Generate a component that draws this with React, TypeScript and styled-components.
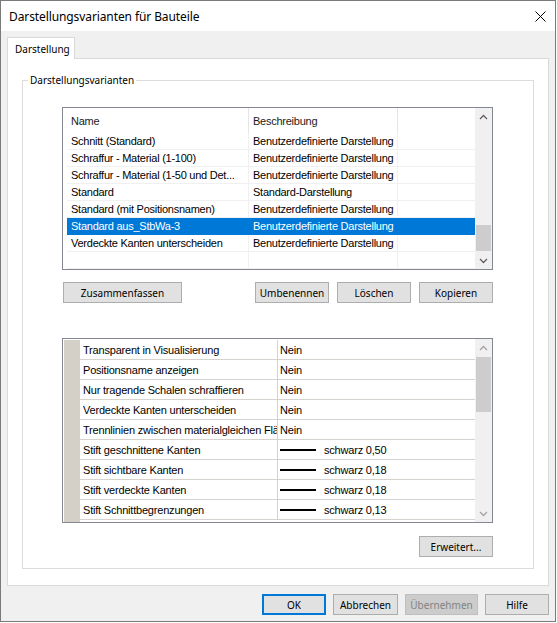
import React from "react";
import styled, { createGlobalStyle } from "styled-components";

const uiFont = `"Noto Sans", "Open Sans", Arial, sans-serif`;
const listFont = `"Liberation Sans", Arial, sans-serif`;

const GlobalStyle = createGlobalStyle`
  html, body {
    margin: 0;
    padding: 0;
    background: #ffffff;
  }
  * {
    box-sizing: border-box;
  }
`;

const Window = styled.div`
  width: 556px;
  height: 622px;
  border: 1px solid #7a7a7a;
  background: #f0f0f0;
  display: flex;
  flex-direction: column;
  font-family: ${uiFont};
  font-size: 10px;
  color: #000;
`;

const TitleBar = styled.div`
  height: 30px;
  flex: none;
  background: #fff;
  display: flex;
  align-items: center;
  justify-content: space-between;
  padding: 0 9px 0 8px;
`;

const Title = styled.span`
  font-size: 12px;
  letter-spacing: -0.1px;
`;

const Body = styled.div`
  flex: 1;
  display: flex;
  flex-direction: column;
  padding: 6px 6px 0 6px;
`;

const TabStrip = styled.div`
  display: flex;
  height: 21px;
`;

const Tab = styled.div`
  width: 68px;
  height: 22px;
  border: 1px solid #d9d9d9;
  border-bottom: none;
  background: #fff;
  padding-left: 7px;
  line-height: 22px;
  position: relative;
  z-index: 1;
`;

const Panel = styled.div`
  height: 528px;
  background: #fff;
  border: 1px solid #d9d9d9;
  display: flex;
  flex-direction: column;
  padding: 0 14px 16px 14px;
`;

const Group = styled.fieldset`
  flex: 1;
  margin: 13px 0 0 0;
  padding: 0;
  border: 1px solid #dcdcdc;
  min-width: 0;
  display: flex;
  flex-direction: column;
`;

const Legend = styled.legend`
  margin-left: 5px;
  padding: 0 2px;
  line-height: 16px;
  font-size: 10px;
`;

const GroupBody = styled.div`
  flex: 1;
  display: flex;
  flex-direction: column;
  padding: 19px 40px 11px 39px;
`;

/* ---------- list view ---------- */

const ListView = styled.div`
  width: 431px;
  height: 163px;
  border: 1px solid #828790;
  display: flex;
  font-family: ${listFont};
  font-size: 11px;
  letter-spacing: -0.25px;
  background: #fff;
`;

const ListMain = styled.div`
  flex: 1;
  padding-left: 4px;
  display: flex;
  flex-direction: column;
  overflow: hidden;
`;

const ListHeader = styled.div`
  height: 25px;
  display: flex;
  flex: none;
`;

const HeaderCell = styled.div<{ $w?: number }>`
  width: ${(p) => (p.$w ? `${p.$w}px` : "auto")};
  flex: ${(p) => (p.$w ? "none" : "1")};
  border-right: ${(p) => (p.$w ? "1px solid #e5e5e5" : "none")};
  padding-left: 4px;
  display: flex;
  align-items: center;
  color: #1a1a1a;
`;

const ListRow = styled.div<{ $selected?: boolean }>`
  height: 17px;
  flex: none;
  display: flex;
  background: ${(p) => (p.$selected ? "#0078d7" : "#fff")};
  color: ${(p) => (p.$selected ? "#fff" : "#000")};
  border-bottom: 1px solid ${(p) => (p.$selected ? "#0078d7" : "#f0f0f0")};
`;

const ListCell = styled.div<{ $w?: number; $selected?: boolean; $clip?: boolean }>`
  width: ${(p) => (p.$w ? `${p.$w}px` : "auto")};
  flex: ${(p) => (p.$w ? "none" : "1")};
  border-right: ${(p) =>
    p.$w ? `1px solid ${p.$selected ? "#0078d7" : "#f0f0f0"}` : "none"};
  padding: ${(p) => (p.$clip ? "0 6px 0 4px" : "0 0 0 4px")};
  line-height: 17px;
  white-space: nowrap;
  overflow: hidden;
  text-overflow: ${(p) => (p.$clip ? "ellipsis" : "clip")};
`;

/* ---------- scrollbar ---------- */

const ScrollBar = styled.div`
  width: 17px;
  flex: none;
  background: #f0f0f0;
  display: flex;
  flex-direction: column;
`;

const ScrollArrow = styled.div`
  height: 17px;
  flex: none;
  display: flex;
  align-items: center;
  justify-content: center;
`;

const ScrollTrack = styled.div<{ $atEnd?: boolean }>`
  flex: 1;
  display: flex;
  flex-direction: column;
  justify-content: ${(p) => (p.$atEnd ? "flex-end" : "flex-start")};
  padding: 1px 1px;
`;

const Thumb = styled.div<{ $h: number }>`
  height: ${(p) => p.$h}px;
  background: #cdcdcd;
`;

/* ---------- buttons ---------- */

const ButtonRow = styled.div<{ $mt: number }>`
  display: flex;
  gap: 8px;
  margin-top: ${(p) => p.$mt}px;
  width: 431px;
`;

const Button = styled.div<{ $w: number; $default?: boolean; $disabled?: boolean }>`
  width: ${(p) => p.$w}px;
  height: 21px;
  flex: none;
  display: flex;
  align-items: center;
  justify-content: center;
  background: ${(p) => (p.$disabled ? "#cccccc" : "#e1e1e1")};
  border: ${(p) =>
    p.$default ? "2px solid #0078d7" : `1px solid ${p.$disabled ? "#bfbfbf" : "#adadad"}`};
  color: ${(p) => (p.$disabled ? "#838383" : "#000")};
  font-size: 10px;
`;

const Spacer = styled.div`
  flex: 1;
`;

/* ---------- property grid ---------- */

const PropGrid = styled.div`
  width: 431px;
  height: 185px;
  margin-top: 35px;
  border: 1px solid #828790;
  padding: 1px 0 0 1px;
  display: flex;
  font-family: ${listFont};
  font-size: 11px;
  letter-spacing: -0.2px;
  background: #fff;
  overflow: hidden;
`;

const Gutter = styled.div`
  width: 16px;
  flex: none;
  background: #d4d0c8;
`;

const PropRows = styled.div`
  flex: 1;
  display: flex;
  flex-direction: column;
`;

const PropRow = styled.div`
  height: 20px;
  flex: none;
  display: flex;
  border-bottom: 1px solid #d6d3ce;
`;

const PropLabel = styled.div`
  width: 198px;
  flex: none;
  border-right: 1px solid #d6d3ce;
  padding-left: 3px;
  line-height: 20px;
  white-space: nowrap;
  overflow: hidden;
`;

const PropValue = styled.div`
  flex: 1;
  padding-left: 2px;
  display: flex;
  align-items: center;
  white-space: nowrap;
`;

const PenLine = styled.div<{ $t: number }>`
  width: 36px;
  height: ${(p) => p.$t}px;
  background: #000;
  margin-right: 8px;
`;

const GridScroll = styled(ScrollBar)`
  margin-top: -1px;
`;

const Footer = styled.div`
  display: flex;
  justify-content: flex-end;
  gap: 7px;
  margin-top: 8px;
`;

const Chevron = ({ up, color }: { up?: boolean; color: string }) => (
  <svg width="9" height="6" viewBox="0 0 9 6">
    <path
      d={up ? "M1 5 L4.5 1.5 L8 5" : "M1 1 L4.5 4.5 L8 1"}
      fill="none"
      stroke={color}
      strokeWidth="1.3"
    />
  </svg>
);

const CloseIcon = () => (
  <svg width="11" height="11" viewBox="0 0 11 11">
    <path d="M0.5 0.5 L10.5 10.5 M10.5 0.5 L0.5 10.5" stroke="#000" strokeWidth="1" />
  </svg>
);

const variants = [
  { name: "Schnitt (Standard)", desc: "Benutzerdefinierte Darstellung" },
  { name: "Schraffur - Material (1-100)", desc: "Benutzerdefinierte Darstellung" },
  { name: "Schraffur - Material (1-50 und Det...", desc: "Benutzerdefinierte Darstellung" },
  { name: "Standard", desc: "Standard-Darstellung" },
  { name: "Standard (mit Positionsnamen)", desc: "Benutzerdefinierte Darstellung" },
  { name: "Standard aus_StbWa-3", desc: "Benutzerdefinierte Darstellung", selected: true },
  { name: "Verdeckte Kanten unterscheiden", desc: "Benutzerdefinierte Darstellung" },
  { name: "", desc: "" },
];

type Prop = { label: string; value: string; pen?: number };

const props: Prop[] = [
  { label: "Transparent in Visualisierung", value: "Nein" },
  { label: "Positionsname anzeigen", value: "Nein" },
  { label: "Nur tragende Schalen schraffieren", value: "Nein" },
  { label: "Verdeckte Kanten unterscheiden", value: "Nein" },
  { label: "Trennlinien zwischen materialgleichen Flächen", value: "Nein" },
  { label: "Stift geschnittene Kanten", value: "schwarz 0,50", pen: 2 },
  { label: "Stift sichtbare Kanten", value: "schwarz 0,18", pen: 2 },
  { label: "Stift verdeckte Kanten", value: "schwarz 0,18", pen: 2 },
  { label: "Stift Schnittbegrenzungen", value: "schwarz 0,13", pen: 2 },
];

export default function App() {
  return (
    <>
      <GlobalStyle />
      <Window>
        <TitleBar>
          <Title>Darstellungsvarianten für Bauteile</Title>
          <CloseIcon />
        </TitleBar>
        <Body>
          <TabStrip>
            <Tab>Darstellung</Tab>
          </TabStrip>
          <Panel>
            <Group>
              <Legend>Darstellungsvarianten</Legend>
              <GroupBody>
                <ListView>
                  <ListMain>
                    <ListHeader>
                      <HeaderCell $w={182}>Name</HeaderCell>
                      <HeaderCell $w={149}>Beschreibung</HeaderCell>
                      <HeaderCell />
                    </ListHeader>
                    {variants.map((v, i) => (
                      <ListRow key={i} $selected={v.selected}>
                        <ListCell $w={182} $selected={v.selected} $clip>
                          {v.name}
                        </ListCell>
                        <ListCell $w={149} $selected={v.selected}>
                          {v.desc}
                        </ListCell>
                        <ListCell />
                      </ListRow>
                    ))}
                  </ListMain>
                  <ScrollBar>
                    <ScrollArrow>
                      <Chevron up color="#606060" />
                    </ScrollArrow>
                    <ScrollTrack $atEnd>
                      <Thumb $h={26} />
                    </ScrollTrack>
                    <ScrollArrow>
                      <Chevron color="#606060" />
                    </ScrollArrow>
                  </ScrollBar>
                </ListView>

                <ButtonRow $mt={12}>
                  <Button $w={119} style={{ marginLeft: 1 }}>
                    Zusammenfassen
                  </Button>
                  <Spacer />
                  <Button $w={74}>Umbenennen</Button>
                  <Button $w={74}>Löschen</Button>
                  <Button $w={74}>Kopieren</Button>
                </ButtonRow>

                <PropGrid>
                  <Gutter />
                  <PropRows>
                    {props.map((p, i) => (
                      <PropRow key={i}>
                        <PropLabel>{p.label}</PropLabel>
                        <PropValue>
                          {p.pen ? <PenLine $t={p.pen} /> : null}
                          {p.value}
                        </PropValue>
                      </PropRow>
                    ))}
                  </PropRows>
                  <GridScroll>
                    <ScrollArrow>
                      <Chevron up color="#a3a3a3" />
                    </ScrollArrow>
                    <ScrollTrack>
                      <Thumb $h={55} />
                    </ScrollTrack>
                    <ScrollArrow>
                      <Chevron color="#a3a3a3" />
                    </ScrollArrow>
                  </GridScroll>
                </PropGrid>

                <ButtonRow $mt={13}>
                  <Spacer />
                  <Button $w={74}>Erweitert...</Button>
                </ButtonRow>
              </GroupBody>
            </Group>
          </Panel>
          <Footer>
            <Button $w={64} $default>
              OK
            </Button>
            <Button $w={65}>Abbrechen</Button>
            <Button $w={73} $disabled>
              Übernehmen
            </Button>
            <Button $w={64}>Hilfe</Button>
          </Footer>
        </Body>
      </Window>
    </>
  );
}
